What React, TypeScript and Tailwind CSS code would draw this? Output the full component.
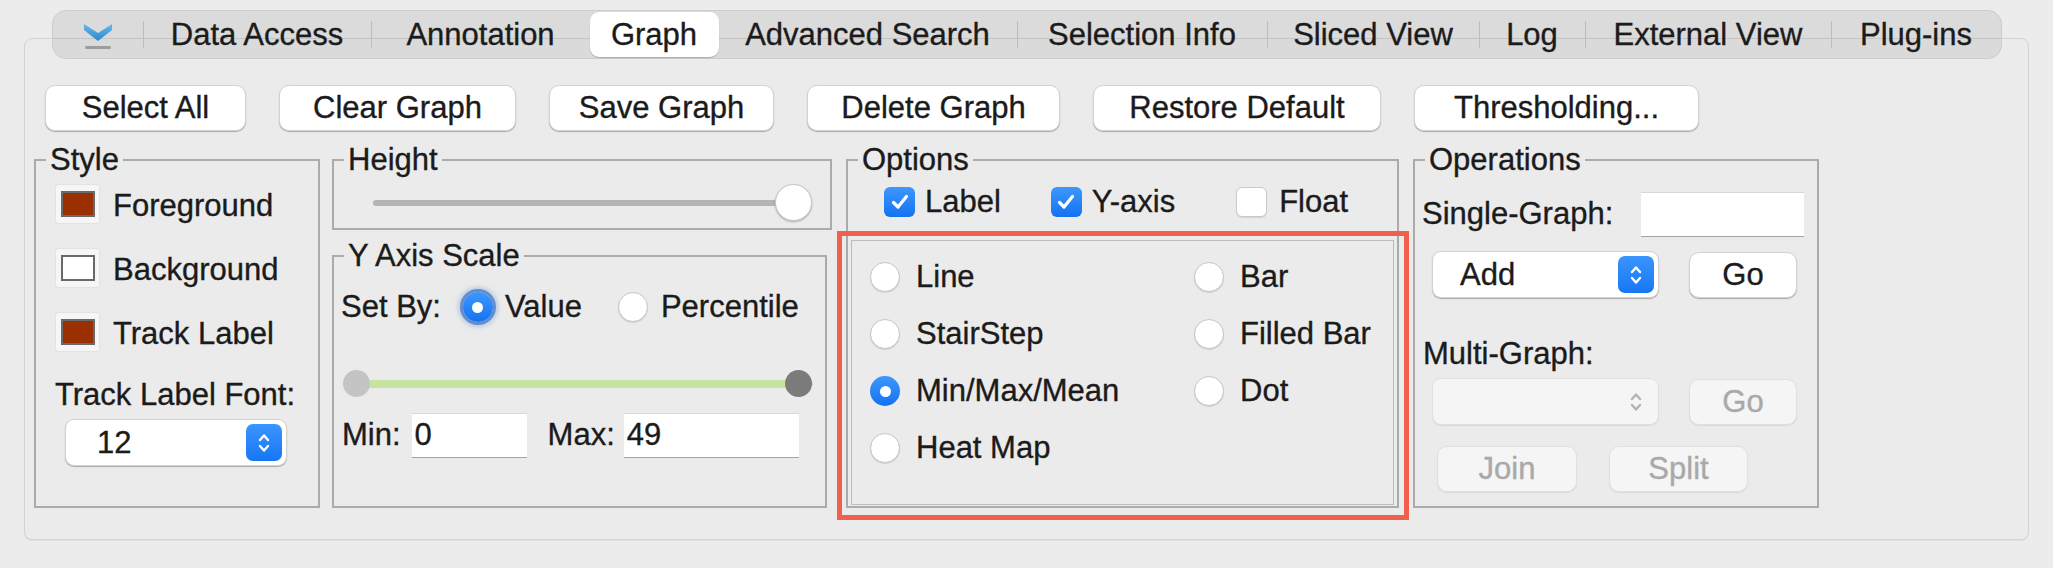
import React from 'react';

type Tab = { label: string; width: string; sep?: boolean; active?: boolean };

const tabs: Tab[] = [
  { label: 'Data Access', width: 'w-[227px]', sep: true },
  { label: 'Annotation', width: 'w-[218px]', sep: true },
  { label: 'Graph', width: 'w-[129px]', active: true },
  { label: 'Advanced Search', width: 'w-[298px]' },
  { label: 'Selection Info', width: 'w-[249px]', sep: true },
  { label: 'Sliced View', width: 'w-[211px]', sep: true },
  { label: 'Log', width: 'w-[105px]', sep: true },
  { label: 'External View', width: 'w-[245px]', sep: true },
  { label: 'Plug-ins', width: 'w-[169px]', sep: true },
];

const toolbar = [
  { label: 'Select All', width: 'w-[201px]' },
  { label: 'Clear Graph', width: 'w-[237px]' },
  { label: 'Save Graph', width: 'w-[225px]' },
  { label: 'Delete Graph', width: 'w-[253px]' },
  { label: 'Restore Default', width: 'w-[288px]' },
  { label: 'Thresholding...', width: 'w-[285px]' },
];

const styleColors = [
  { label: 'Foreground', swatch: 'bg-[#9a2f00]' },
  { label: 'Background', swatch: 'bg-white' },
  { label: 'Track Label', swatch: 'bg-[#9a2f00]' },
];

const graphTypes = [
  { label: 'Line' },
  { label: 'Bar' },
  { label: 'StairStep' },
  { label: 'Filled Bar' },
  { label: 'Min/Max/Mean', checked: true },
  { label: 'Dot' },
  { label: 'Heat Map' },
];

const PushButton = ({ label, width, disabled }: { label: string; width: string; disabled?: boolean }) => (
  <div
    className={`flex h-[46px] shrink-0 items-center justify-center rounded-[10px] border ${width} ${
      disabled
        ? 'border-[#e0e0e0] bg-[#f5f5f5] text-[#a9a9a9] shadow-[0_1px_1px_rgba(0,0,0,0.08)]'
        : 'border-[#d2d2d2] bg-white text-[#1b1b1b] shadow-[0_1px_1px_rgba(0,0,0,0.28)]'
    }`}
  >
    {label}
  </div>
);

const Stepper = ({ disabled }: { disabled?: boolean }) => (
  <div
    className={`flex h-[37px] w-[36px] items-center justify-center rounded-[7px] ${
      disabled ? '' : 'bg-gradient-to-b from-[#3b95fd] to-[#1576f4]'
    }`}
  >
    <svg width="14" height="24" viewBox="0 0 14 24" fill="none">
      <path
        d="M3 9 L7 4.5 L11 9 M3 15 L7 19.5 L11 15"
        stroke={disabled ? '#b3b3b3' : '#ffffff'}
        strokeWidth="2.4"
        strokeLinecap="round"
        strokeLinejoin="round"
      />
    </svg>
  </div>
);

const PopupSelect = ({ value, width, pad, disabled }: { value?: string; width: string; pad: string; disabled?: boolean }) => (
  <div
    className={`flex h-[47px] shrink-0 items-center justify-between rounded-[9px] border pr-[4px] ${width} ${pad} ${
      disabled
        ? 'border-[#e0e0e0] bg-[#f5f5f5] shadow-[0_1px_1px_rgba(0,0,0,0.08)]'
        : 'border-[#d2d2d2] bg-white shadow-[0_1px_1px_rgba(0,0,0,0.28)]'
    }`}
  >
    <span>{value}</span>
    <Stepper disabled={disabled} />
  </div>
);

const Radio = ({ checked, focused }: { checked?: boolean; focused?: boolean }) => (
  <span
    className={`flex h-[30px] w-[30px] shrink-0 items-center justify-center rounded-full ${
      checked
        ? 'bg-gradient-to-b from-[#3e97fc] to-[#1272f0]'
        : 'border border-[#c6c6c6] bg-white shadow-[0_1px_1px_rgba(0,0,0,0.12)]'
    } ${focused ? 'shadow-[0_0_0_3px_rgba(70,120,195,0.75),0_0_4px_5px_rgba(90,140,210,0.35)]' : ''}`}
  >
    {checked && <span className="h-[11px] w-[11px] rounded-full bg-white" />}
  </span>
);

const Checkbox = ({ checked }: { checked?: boolean }) => (
  <span
    className={`flex h-[30px] w-[31px] shrink-0 items-center justify-center rounded-[6px] ${
      checked
        ? 'bg-gradient-to-b from-[#3e97fc] to-[#1272f0]'
        : 'border border-[#c9c9c9] bg-white shadow-[0_1px_1px_rgba(0,0,0,0.1)]'
    }`}
  >
    {checked && (
      <svg width="20" height="18" viewBox="0 0 20 18" fill="none">
        <path d="M3.5 9.5 L8 14 L16.5 3.5" stroke="#fff" strokeWidth="3.2" strokeLinecap="round" strokeLinejoin="round" />
      </svg>
    )}
  </span>
);

const TextField = ({ value, width }: { value?: string; width: string }) => (
  <div
    className={`flex h-[44px] shrink-0 items-center bg-white pl-[3px] shadow-[inset_0_1px_0_#d8d8d8,0_1px_0_#a3a3a3] ${width}`}
  >
    {value}
  </div>
);

const Group = ({ title, className, children }: { title: string; className: string; children: React.ReactNode }) => (
  <fieldset className={`shrink-0 border-2 border-[#ababab] ${className}`}>
    <legend className="ml-[10px] px-[4px] leading-[32px]">{title}</legend>
    {children}
  </fieldset>
);

const App = () => {
  return (
    <div className="h-[568px] w-[2053px] overflow-hidden bg-[#ececec] pt-[10px] font-['Liberation_Sans',Arial,sans-serif] text-[31px] leading-[36px] text-[#1b1b1b] [-webkit-text-stroke:0.35px]">
      {/* Tab strip */}
      <div className="relative z-10 mx-auto flex h-[49px] w-[1950px] items-center rounded-[14px] border border-[#cdcdcd] bg-black/[0.07] px-0">
        <div className="flex w-[90px] flex-col items-center justify-center gap-[5px] pt-[2px]">
          <svg width="28" height="18" viewBox="0 0 28 18">
            <defs>
              <linearGradient id="chev" x1="0" y1="0" x2="0" y2="1">
                <stop offset="0" stopColor="#66bbec" />
                <stop offset="1" stopColor="#2b87c9" />
              </linearGradient>
            </defs>
            <path d="M0 1 L14 10 L28 1 L28 7 L14 18 L0 7 Z" fill="url(#chev)" />
          </svg>
          <span className="h-[3px] w-[26px] rounded-full bg-[#9d9d9d]" />
        </div>
        {tabs.map((tab) => (
          <React.Fragment key={tab.label}>
            {tab.sep && <span className="h-[27px] w-px bg-[#bdbdbd]" />}
            <div
              className={`flex h-[45px] items-center justify-center ${tab.width} ${
                tab.active ? 'rounded-[9px] bg-white shadow-[0_1px_1px_rgba(0,0,0,0.22)]' : ''
              }`}
            >
              {tab.label}
            </div>
          </React.Fragment>
        ))}
      </div>

      {/* Graph tab content */}
      <div className="-mt-[21px] ml-[24px] flex h-[502px] w-[2005px] flex-col rounded-[8px] border border-[#d3d3d3] bg-[#ebebeb] pt-[46px] pl-[9px] shadow-[0_1px_1px_rgba(0,0,0,0.06)]">
        <div className="ml-[11px] flex gap-[33px]">
          {toolbar.map((b) => (
            <PushButton key={b.label} label={b.label} width={b.width} />
          ))}
        </div>

        <div className="mt-[13px] flex items-start">
          {/* Style */}
          <Group title="Style" className="h-[364px] w-[286px]">
            <div className="flex flex-col gap-[24px] pt-[8px] pl-[19px]">
              {styleColors.map((c) => (
                <div key={c.label} className="flex h-[40px] items-center gap-[13px]">
                  <span className="flex h-[40px] w-[45px] items-center justify-center rounded-[3px] border border-[#e2e2e2] bg-[#f6f6f6]">
                    <span className={`h-[26px] w-[34px] border-2 border-[#6a6a6a] ${c.swatch}`} />
                  </span>
                  <span className="pt-[3px]">{c.label}</span>
                </div>
              ))}
            </div>
            <div className="mt-[25px] pl-[19px]">Track Label Font:</div>
            <div className="mt-[6px] pl-[29px]">
              <PopupSelect value="12" width="w-[222px]" pad="pl-[31px]" />
            </div>
          </Group>

          <div className="ml-[12px] flex w-[500px] flex-col">
            {/* Height */}
            <Group title="Height" className="h-[86px] w-[500px]">
              <div className="relative mt-[8px] ml-[39px] flex h-[37px] w-[437px] items-center">
                <span className="h-[6px] w-full rounded-full bg-[#b4b4b4]" />
                <span className="absolute top-0 left-[402px] h-[37px] w-[37px] rounded-full border border-[#c8c8c8] bg-white shadow-[0_1px_2px_rgba(0,0,0,0.3)]" />
              </div>
            </Group>

            {/* Y Axis Scale */}
            <Group title="Y Axis Scale" className="mt-[10px] h-[268px] w-[495px]">
              <div className="mt-[17px] flex h-[36px] items-center pl-[7px]">
                <span>Set By:</span>
                <span className="ml-[22px]">
                  <Radio checked focused />
                </span>
                <span className="ml-[12px]">Value</span>
                <span className="ml-[36px]">
                  <Radio />
                </span>
                <span className="ml-[13px]">Percentile</span>
              </div>
              <div className="relative mt-[45px] ml-[9px] flex h-[27px] w-[470px] items-center">
                <span className="h-[4px] w-full rounded-full bg-[#c9c9c9]" />
                <span className="absolute top-[9.5px] left-[26px] h-[8px] w-[430px] bg-[#c6e3a0]" />
                <span className="absolute top-0 left-[0px] h-[27px] w-[27px] rounded-full bg-[#c4c4c4]" />
                <span className="absolute top-0 left-[442px] h-[27px] w-[27px] rounded-full bg-[#7b7b7b]" />
              </div>
              <div className="mt-[16px] flex items-center pl-[8px]">
                <span>Min:</span>
                <span className="ml-[11px]">
                  <TextField value="0" width="w-[115px]" />
                </span>
                <span className="ml-[21px]">Max:</span>
                <span className="ml-[9px]">
                  <TextField value="49" width="w-[175px]" />
                </span>
              </div>
            </Group>
          </div>

          {/* Options */}
          <Group title="Options" className="ml-[14px] flex h-[364px] w-[553px] flex-col">
            <div className="mt-[11px] flex h-[30px] items-center pl-[36px]">
              <Checkbox checked />
              <span className="ml-[10px]">Label</span>
              <span className="ml-[50px]">
                <Checkbox checked />
              </span>
              <span className="ml-[10px]">Y-axis</span>
              <span className="ml-[61px]">
                <Checkbox />
              </span>
              <span className="ml-[12px]">Float</span>
            </div>
            <div className="relative mt-[23px] mr-[3px] mb-[1px] ml-[3px] h-[266px] border border-[#bdbdbd]">
              <div className="grid grid-cols-[324px_1fr] gap-y-[21px] pt-[18px] pl-[18px]">
                {graphTypes.map((g) => (
                  <div key={g.label} className="flex h-[36px] items-center gap-[16px]">
                    <Radio checked={g.checked} />
                    <span>{g.label}</span>
                  </div>
                ))}
              </div>
              {/* highlight frame */}
              <div className="pointer-events-none absolute -top-[10px] -right-[16px] -bottom-[16px] -left-[15px] border-[5px] border-[#f1604c]" />
            </div>
          </Group>

          {/* Operations */}
          <Group title="Operations" className="ml-[14px] h-[364px] w-[406px]">
            <div className="mt-[16px] flex items-center justify-between pr-[13px] pl-[7px]">
              <span>Single-Graph:</span>
              <TextField width="w-[163px]" />
            </div>
            <div className="mt-[15px] flex items-center pl-[17px]">
              <PopupSelect value="Add" width="w-[227px]" pad="pl-[27px]" />
              <span className="ml-[30px]">
                <PushButton label="Go" width="w-[108px]" />
              </span>
            </div>
            <div className="mt-[38px] pl-[8px]">Multi-Graph:</div>
            <div className="mt-[6px] flex items-center pl-[17px]">
              <PopupSelect width="w-[227px]" pad="pl-[27px]" disabled />
              <span className="ml-[30px]">
                <PushButton label="Go" width="w-[108px]" disabled />
              </span>
            </div>
            <div className="mt-[21px] flex items-center pl-[22px]">
              <PushButton label="Join" width="w-[140px]" disabled />
              <span className="ml-[32px]">
                <PushButton label="Split" width="w-[139px]" disabled />
              </span>
            </div>
          </Group>
        </div>
      </div>
    </div>
  );
};

export default App;
